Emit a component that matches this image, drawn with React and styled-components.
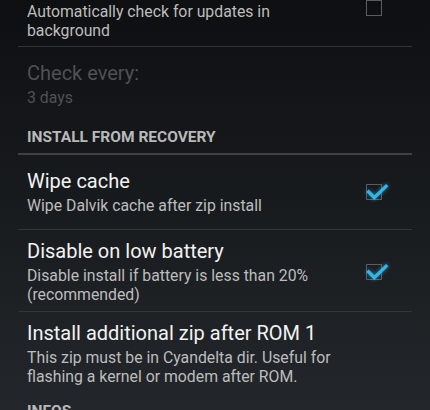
import React from "react";
import styled, { createGlobalStyle } from "styled-components";

const GlobalStyle = createGlobalStyle`
  html, body {
    margin: 0;
    padding: 0;
    height: 100%;
  }
  body {
    font-family: Roboto, "Liberation Sans", sans-serif;
    background: linear-gradient(180deg, #0e0f11 0%, #181b1e 50%, #23272b 100%);
    overflow: hidden;
  }
`;

const prefs = [
  {
    type: "check",
    title: "Automatic updates",
    summary: "Automatically check for updates in background",
    checked: false,
    pad: "11px 0 6px",
  },
  {
    type: "item",
    title: "Check every:",
    summary: "3 days",
    disabled: true,
    pad: "14px 0 5px",
    last: true,
  },
  { type: "header", title: "INSTALL FROM RECOVERY" },
  {
    type: "check",
    title: "Wipe cache",
    summary: "Wipe Dalvik cache after zip install",
    checked: true,
    pad: "14px 0 14px",
  },
  {
    type: "check",
    title: "Disable on low battery",
    summary: "Disable install if battery is less than 20% (recommended)",
    checked: true,
    pad: "9px 0 7px",
  },
  {
    type: "item",
    title: "Install additional zip after ROM 1",
    summary: "This zip must be in Cyandelta dir. Useful for flashing a kernel or modem after ROM.",
    pad: "9px 0 0",
    last: true,
  },
  { type: "header", title: "INFOS" },
];

const CheckBox = ({ checked }) => (
  <Box>
    {checked && (
      <Tick viewBox="0 0 26 22" width="26" height="22">
        <path
          d="M3.7 11 L9.3 16.7 L21 5.3"
          fill="none"
          stroke="#33b5e5"
          strokeWidth="3.4"
          strokeLinecap="square"
        />
      </Tick>
    )}
  </Box>
);

const App = () => {
  return (
    <>
      <GlobalStyle />
      <Screen>
        <List>
          {prefs.map((p, i) =>
            p.type === "header" ? (
              <Header key={i}>{p.title}</Header>
            ) : (
              <Row key={i} $pad={p.pad} $last={p.last}>
                <Texts>
                  <Title $disabled={p.disabled}>{p.title}</Title>
                  <Summary $disabled={p.disabled}>{p.summary}</Summary>
                </Texts>
                {p.type === "check" && (
                  <Widget>
                    <CheckBox checked={p.checked} />
                  </Widget>
                )}
              </Row>
            )
          )}
        </List>
      </Screen>
    </>
  );
};

const Screen = styled.div`
  width: 430px;
  height: 410px;
  overflow: hidden;
`;

const List = styled.div`
  display: flex;
  flex-direction: column;
  margin: -36px 18px 0;
`;

const Row = styled.div`
  display: flex;
  align-items: center;
  padding: ${({ $pad }) => $pad};
  border-bottom: ${({ $last }) => ($last ? "none" : "1px solid #323538")};
`;

const Texts = styled.div`
  flex: 1;
  display: flex;
  flex-direction: column;
  gap: 3px;
  padding-left: 9px;
`;

const Title = styled.div`
  font-size: 20px;
  line-height: 24px;
  color: ${({ $disabled }) => ($disabled ? "#4f5153" : "#f2f2f2")};
  white-space: nowrap;
`;

const Summary = styled.div`
  max-width: 315px;
  font-size: 15.8px;
  line-height: 19px;
  color: ${({ $disabled }) => ($disabled ? "#4f5153" : "#bdbdbd")};
`;

const Header = styled.div`
  margin-top: 17px;
  padding: 0 0 7px 9px;
  font-size: 15.5px;
  line-height: 17px;
  font-weight: 700;
  color: #b9b9b9;
  border-bottom: 2px solid #3f4245;
`;

const Widget = styled.div`
  display: flex;
  align-items: center;
  justify-content: center;
  width: 16px;
  margin-right: 30px;
`;

const Box = styled.span`
  position: relative;
  display: block;
  width: 16px;
  height: 16px;
  box-sizing: border-box;
  border: 1px solid #5a5c5e;
`;

const Tick = styled.svg`
  position: absolute;
  left: -2px;
  top: -4px;
  overflow: visible;
  filter: drop-shadow(0 0 2px rgba(51, 181, 229, 0.7));
`;

export default App;
